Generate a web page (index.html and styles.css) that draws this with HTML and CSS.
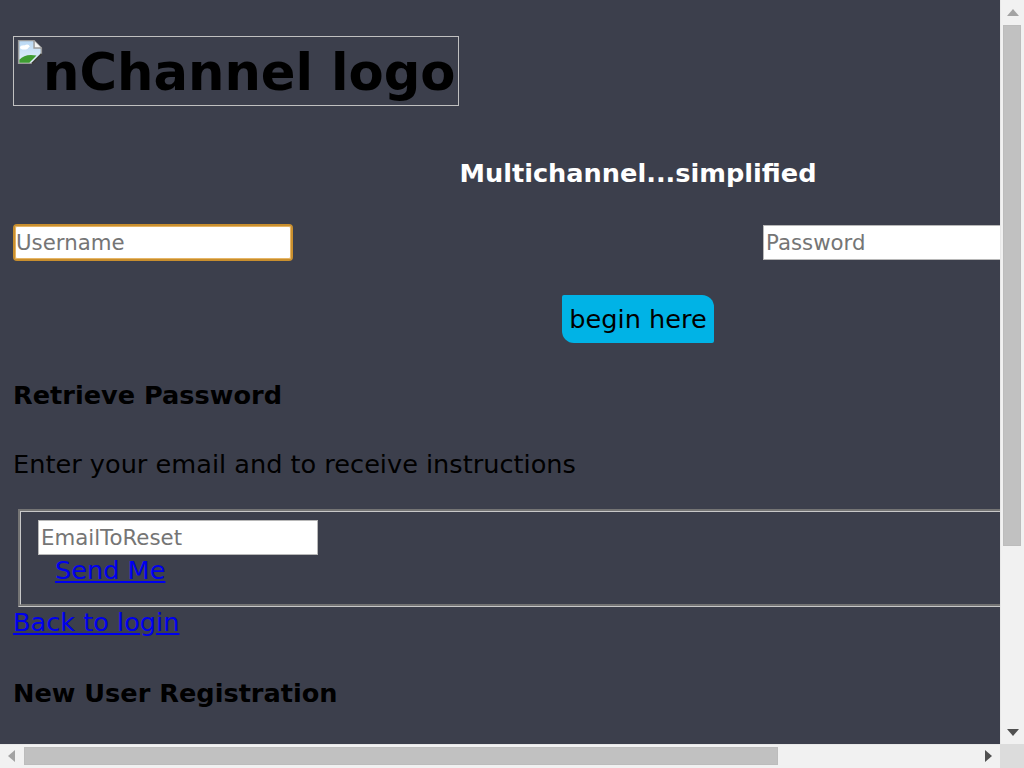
FILE: index.html
```html
<!DOCTYPE html>
<html lang="en">
<head>
<meta charset="utf-8">
<title>nChannel</title>
<link rel="stylesheet" href="styles.css">
</head>
<body>
<div class="page">
  <h1 class="logo-line">
    <span class="broken-img" role="img" aria-label="nChannel logo">
      <svg class="broken-icon" viewBox="0 0 16 16" width="26" height="26" aria-hidden="true">
        <defs>
          <linearGradient id="sky" x1="0" y1="0" x2="0" y2="1">
            <stop offset="0" stop-color="#b9d8f4"/>
            <stop offset="1" stop-color="#e4f1fc"/>
          </linearGradient>
        </defs>
        <path d="M1 1 H10.5 L15 5.5 V9.4 L9.4 15 H1 Z" fill="url(#sky)" stroke="#9a9a9a" stroke-width="0.9"/>
        <ellipse cx="4.4" cy="5.2" rx="2.5" ry="1.3" fill="#ffffff"/>
        <ellipse cx="6.2" cy="4.5" rx="1.5" ry="1.1" fill="#ffffff"/>
        <path d="M1.45 12.8 C3.8 10 7.6 9.2 12 10.2 L7.6 14.55 H1.45 Z" fill="#3f9d32"/>
        <path d="M10.5 1 V5.5 H15" fill="#f4f4f4" stroke="#9a9a9a" stroke-width="0.9"/>
        <path d="M15.2 9.2 L9.2 15.2" stroke="#3a3a3a" stroke-width="1.2" fill="none"/>
      </svg><span class="alt-text">nChannel logo</span>
    </span>
  </h1>

  <h4 class="tagline">Multichannel...simplified</h4>

  <div class="login-row">
    <input class="field field-focus" type="text" placeholder="Username" autofocus>
    <input class="field" type="password" placeholder="Password">
  </div>

  <div class="btn-row">
    <button class="begin-btn" type="button">begin here</button>
  </div>

  <h4 class="section-title title-retrieve">Retrieve Password</h4>
  <p class="intro">Enter your email and to receive instructions</p>

  <fieldset class="reset-box">
    <input class="field" type="email" placeholder="EmailToReset">
    <div class="send-line"><a class="link" href="#">Send Me</a></div>
  </fieldset>
  <div class="back-line"><a class="link" href="#">Back to login</a></div>

  <h4 class="section-title title-register">New User Registration</h4>
</div>

<div class="scrollbar scrollbar-v" aria-hidden="true">
  <span class="sb-btn sb-up"></span>
  <span class="sb-track sb-track-v"><span class="sb-thumb sb-thumb-v"></span></span>
  <span class="sb-btn sb-down"></span>
</div>
<div class="scrollbar scrollbar-h" aria-hidden="true">
  <span class="sb-btn sb-left"></span>
  <span class="sb-track sb-track-h"><span class="sb-thumb sb-thumb-h"></span></span>
  <span class="sb-btn sb-right"></span>
</div>
<div class="scrollbar-corner" aria-hidden="true"></div>
</body>
</html>
```

FILE: styles.css
```css
html {
  background: #3c3f4c;
  overflow: hidden;
}

body {
  margin: 0;
  background: #3c3f4c;
  font-family: "DejaVu Sans", sans-serif;
  font-size: 25.6px;
  color: #000;
}

.page {
  width: 1250px;
  padding: 36px 10px 286px 13px;
}

.logo-line {
  display: flex;
  margin: 0;
  font-size: 51.2px;
  line-height: 1;
}

.broken-img {
  display: flex;
  align-items: flex-start;
  box-sizing: border-box;
  height: 70px;
  border: 1px solid #c0c0c0;
  padding: 0 3px 0 3px;
}

.broken-icon {
  flex: none;
  margin-top: 2px;
  width: 26px;
  height: 26px;
}

.alt-text {
  font-weight: bold;
  line-height: normal;
  padding-top: 5px;
  color: #000;
}

.tagline {
  margin: 52px 0 0;
  text-align: center;
  font-weight: bold;
  font-size: 25.6px;
  line-height: normal;
  color: #fff;
}

.login-row {
  display: flex;
  align-items: center;
  gap: 470px;
  margin-top: 36px;
  height: 37px;
}

.field {
  box-sizing: border-box;
  width: 280px;
  height: 35px;
  margin: 0;
  padding: 0 2px;
  border: 1px solid #b8b8b8;
  background: #fff;
  font-family: "DejaVu Sans", sans-serif;
  font-size: 21.3px;
  color: #000;
  outline: none;
}

.field::placeholder {
  color: #757575;
}

.field-focus {
  height: 37px;
  border: 2px solid #c98f2e;
  border-radius: 4px;
  padding: 0 1px;
  caret-color: #000;
  box-shadow: inset 0 0 0 1px #e6b566;
}

.field-focus:focus {
  outline: none;
}

.btn-row {
  display: flex;
  justify-content: center;
  margin-top: 34px;
}

.begin-btn {
  height: 48px;
  margin: 0;
  padding: 0 7px;
  border: none;
  border-radius: 2px 12px 2px 12px;
  background: #00b3e6;
  color: #000;
  font-family: "DejaVu Sans", sans-serif;
  font-size: 25.6px;
  line-height: 48px;
}

.section-title {
  margin: 0;
  font-size: 25.6px;
  font-weight: bold;
  line-height: normal;
}

.title-retrieve {
  margin-top: 37px;
}

.title-register {
  margin-top: 41px;
}

.intro {
  margin: 39px 0 0;
  line-height: normal;
}

.reset-box {
  margin: 30px 2px 0 5px;
  padding: 8px 17px 19px 17px;
  border: 3px groove #c8c8c8;
  min-width: 0;
}

.send-line {
  padding-left: 17px;
  line-height: normal;
}

.back-line {
  line-height: normal;
}

.link {
  color: #0000ee;
  text-decoration: underline;
}

/* Browser-style scrollbars drawn over the viewport edges */
.scrollbar {
  position: fixed;
  display: flex;
  background: #f1f1f1;
}

.scrollbar-v {
  top: 0;
  right: 0;
  width: 24px;
  height: 744px;
  flex-direction: column;
  border-left: 1px solid #e8e8e8;
  box-sizing: border-box;
}

.scrollbar-h {
  left: 0;
  bottom: 0;
  width: 1000px;
  height: 24px;
  flex-direction: row;
  border-top: 1px solid #e8e8e8;
  box-sizing: border-box;
}

.scrollbar-corner {
  position: fixed;
  right: 0;
  bottom: 0;
  width: 24px;
  height: 24px;
  background: #dcdcdc;
}

.sb-btn {
  flex: none;
  position: relative;
  width: 23px;
  height: 24px;
}

.scrollbar-h .sb-btn {
  width: 24px;
  height: 23px;
}

.sb-btn::after {
  content: "";
  position: absolute;
  width: 0;
  height: 0;
  border-style: solid;
  border-color: transparent;
}

.sb-up::after {
  left: 6px;
  top: 9px;
  border-width: 0 6px 7px 6px;
  border-bottom-color: #a3a3a3;
}

.sb-down::after {
  left: 6px;
  top: 9px;
  border-width: 7px 6px 0 6px;
  border-top-color: #505050;
}

.sb-left::after {
  left: 8px;
  top: 5px;
  border-width: 6px 7px 6px 0;
  border-right-color: #a3a3a3;
}

.sb-right::after {
  left: 9px;
  top: 5px;
  border-width: 6px 0 6px 7px;
  border-left-color: #505050;
}

.sb-track {
  flex: 1;
  display: flex;
}

.sb-track-v {
  flex-direction: column;
  padding: 1px 3px 0 2px;
}

.sb-track-h {
  flex-direction: row;
  padding: 2px 0 3px 0;
}

.sb-thumb {
  background: #c1c1c1;
  border: 1px solid #bcbcbc;
  box-sizing: border-box;
}

.sb-thumb-v {
  height: 521px;
}

.sb-thumb-h {
  width: 754px;
}
```
